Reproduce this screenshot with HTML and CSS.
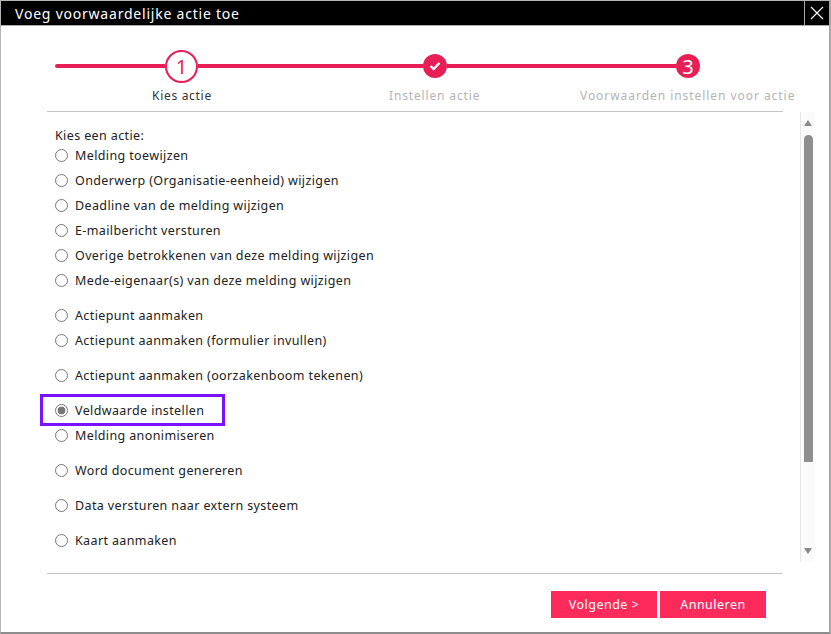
FILE: index.html
```html
<!DOCTYPE html>
<html lang="nl">
<head>
<meta charset="utf-8">
<title>Voeg voorwaardelijke actie toe</title>
<link rel="stylesheet" href="styles.css">
</head>
<body>
<div class="dialog">
  <header class="titlebar">
    <h1 class="title">Voeg voorwaardelijke actie toe</h1>
    <button class="close" aria-label="Sluiten">
      <svg width="14" height="14" viewBox="0 0 14 14"><path d="M1 1 13 13M13 1 1 13" stroke="#fff" stroke-width="1.2" fill="none"/></svg>
    </button>
  </header>
  <div class="body">
    <div class="wizard">
      <div class="track">
        <span class="line line-first"></span>
        <span class="node node-open">1</span>
        <span class="line line-second"></span>
        <span class="node node-fill"><svg width="12" height="10" viewBox="0 0 12 10"><path d="M1.6 5 4.6 8 10.4 2" stroke="#fff" stroke-width="2.4" fill="none"/></svg></span>
        <span class="line line-third"></span>
        <span class="node node-fill">3</span>
      </div>
      <div class="labels">
        <span class="label label-on">Kies actie</span>
        <span class="label label-mid">Instellen actie</span>
        <span class="label label-last">Voorwaarden instellen voor actie</span>
      </div>
    </div>
    <div class="scrollarea">
      <form class="options">
        <p class="prompt">Kies een actie:</p>
        <label class="opt"><input type="radio" name="a"><span>Melding toewijzen</span></label>
        <label class="opt"><input type="radio" name="a"><span>Onderwerp (Organisatie-eenheid) wijzigen</span></label>
        <label class="opt"><input type="radio" name="a"><span>Deadline van de melding wijzigen</span></label>
        <label class="opt"><input type="radio" name="a"><span>E-mailbericht versturen</span></label>
        <label class="opt"><input type="radio" name="a"><span>Overige betrokkenen van deze melding wijzigen</span></label>
        <label class="opt"><input type="radio" name="a"><span>Mede-eigenaar(s) van deze melding wijzigen</span></label>
        <label class="opt gap"><input type="radio" name="a"><span>Actiepunt aanmaken</span></label>
        <label class="opt"><input type="radio" name="a"><span>Actiepunt aanmaken (formulier invullen)</span></label>
        <label class="opt gap"><input type="radio" name="a"><span>Actiepunt aanmaken (oorzakenboom tekenen)</span></label>
        <label class="opt gap highlighted"><input type="radio" name="a" checked><span>Veldwaarde instellen</span></label>
        <label class="opt"><input type="radio" name="a"><span>Melding anonimiseren</span></label>
        <label class="opt gap"><input type="radio" name="a"><span>Word document genereren</span></label>
        <label class="opt gap"><input type="radio" name="a"><span>Data versturen naar extern systeem</span></label>
        <label class="opt gap"><input type="radio" name="a"><span>Kaart aanmaken</span></label>
      </form>
      <div class="scrollbar">
        <span class="arrow arrow-up"></span>
        <span class="thumb"></span>
        <span class="arrow arrow-down"></span>
      </div>
    </div>
    <div class="footer">
      <button class="btn" type="button">Volgende &gt;</button>
      <button class="btn" type="button">Annuleren</button>
    </div>
  </div>
</div>
</body>
</html>
```
FILE: styles.css
```css
*, *::after { box-sizing: border-box; }
html, body { margin: 0; height: 100%; }
body {
  background: #fff;
  font-family: "Noto Sans", "Liberation Sans", sans-serif;
  font-size: 12.5px;
  color: #222;
  overflow: hidden;
}
.dialog {
  width: 831px;
  height: 634px;
  border: 1px solid #b5b5b5;
  border-bottom: 2px solid #8c8c8c;
  border-right: 2px solid #a8a8a8;
  display: flex;
  flex-direction: column;
  background: #fff;
}
.titlebar {
  height: 25px;
  flex: none;
  background: #000;
  display: flex;
  align-items: center;
  justify-content: space-between;
  border-bottom: 1px solid #aaa;
}
.title {
  margin: 0 0 0 14px;
  font-size: 14px;
  font-weight: 400;
  letter-spacing: 0.78px;
  color: #fff;
}
.close {
  width: 25px;
  height: 24px;
  padding: 0;
  background: #000;
  border: 0;
  border-left: 1px solid #aaa;
  display: flex;
  align-items: center;
  justify-content: center;
}
.body { flex: 1; display: flex; flex-direction: column; min-height: 0; padding: 0 0 0 46px; }
.wizard { width: 736px; height: 86px; border-bottom: 1px solid #c4c4c4; flex: none; }
.track { display: flex; align-items: center; padding: 24px 0 0 8px; height: 56px; }
.line { height: 4px; background: #e81e56; flex: none; }
.line-first { width: 110px; border-radius: 2px 0 0 2px; }
.line-second { width: 225px; }
.line-third { width: 229px; }
.node {
  flex: none;
  border-radius: 50%;
  display: flex;
  align-items: center;
  justify-content: center;
}
.node-open {
  width: 33px;
  height: 33px;
  border: 2px solid #e81e56;
  color: #e81e56;
  font-size: 20px;
  background: #fff;
}
.node-fill { width: 24px; height: 24px; background: #e81e56; color: #fff; font-size: 20px; }
.labels { height: 16px; margin-top: 6px; display: flex; }
.label { flex: none; font-size: 12px; letter-spacing: 0.7px; color: #b4b4b4; line-height: 16px; white-space: nowrap; }
.label-on { color: #333; margin-left: 105px; width: 237px; }
.label-mid { width: 191px; letter-spacing: 0.85px; }
.label-last { letter-spacing: 0.95px; }
.scrollarea { flex: none; display: flex; height: 461px; }
.options { width: 753px; padding: 16px 0 0 8px; flex: none; }
.prompt { margin: 0; height: 15px; line-height: 15px; letter-spacing: 0.38px; }
.opt { display: flex; align-items: center; height: 25px; letter-spacing: 0.38px; white-space: nowrap; }
.opt input {
  appearance: none;
  width: 13px;
  height: 13px;
  margin: 0 7px 0 0;
  border: 1px solid #777;
  border-radius: 50%;
  background: #fff;
  flex: none;
}
.opt input:checked { background: radial-gradient(circle, #777 0 3.6px, #fff 4.2px); }
.gap { margin-top: 10px; }
.highlighted { position: relative; }
.highlighted::after {
  content: "";
  position: absolute;
  left: -15px;
  top: -4px;
  width: 185px;
  height: 32px;
  border: 3px solid #7a12ff;
  pointer-events: none;
}
.scrollbar {
  width: 15px;
  height: 450px;
  background: #fbfbfb;
  border-left: 1px solid #e6e6e6;
  display: flex;
  flex-direction: column;
  align-items: center;
  padding: 8px 0;
}
.arrow { width: 0; height: 0; border-left: 4.5px solid transparent; border-right: 4.5px solid transparent; flex: none; }
.arrow-up { border-bottom: 6px solid #8a8a8a; }
.arrow-down { border-top: 6px solid #8a8a8a; margin-top: auto; }
.thumb { width: 9px; height: 327px; margin-top: 9px; background: #8f8f8f; border-radius: 5px 5px 0 0; }
.footer {
  width: 736px;
  flex: none;
  height: 59px;
  border-top: 1px solid #c4c4c4;
  display: flex;
  justify-content: flex-end;
  gap: 3px;
  padding: 17px 17px 0 0;
}
.btn {
  width: 106px;
  height: 27px;
  padding: 0;
  border: 0;
  background: #ff2a5c;
  color: #fff;
  font: inherit;
  letter-spacing: 0.5px;
}
```
